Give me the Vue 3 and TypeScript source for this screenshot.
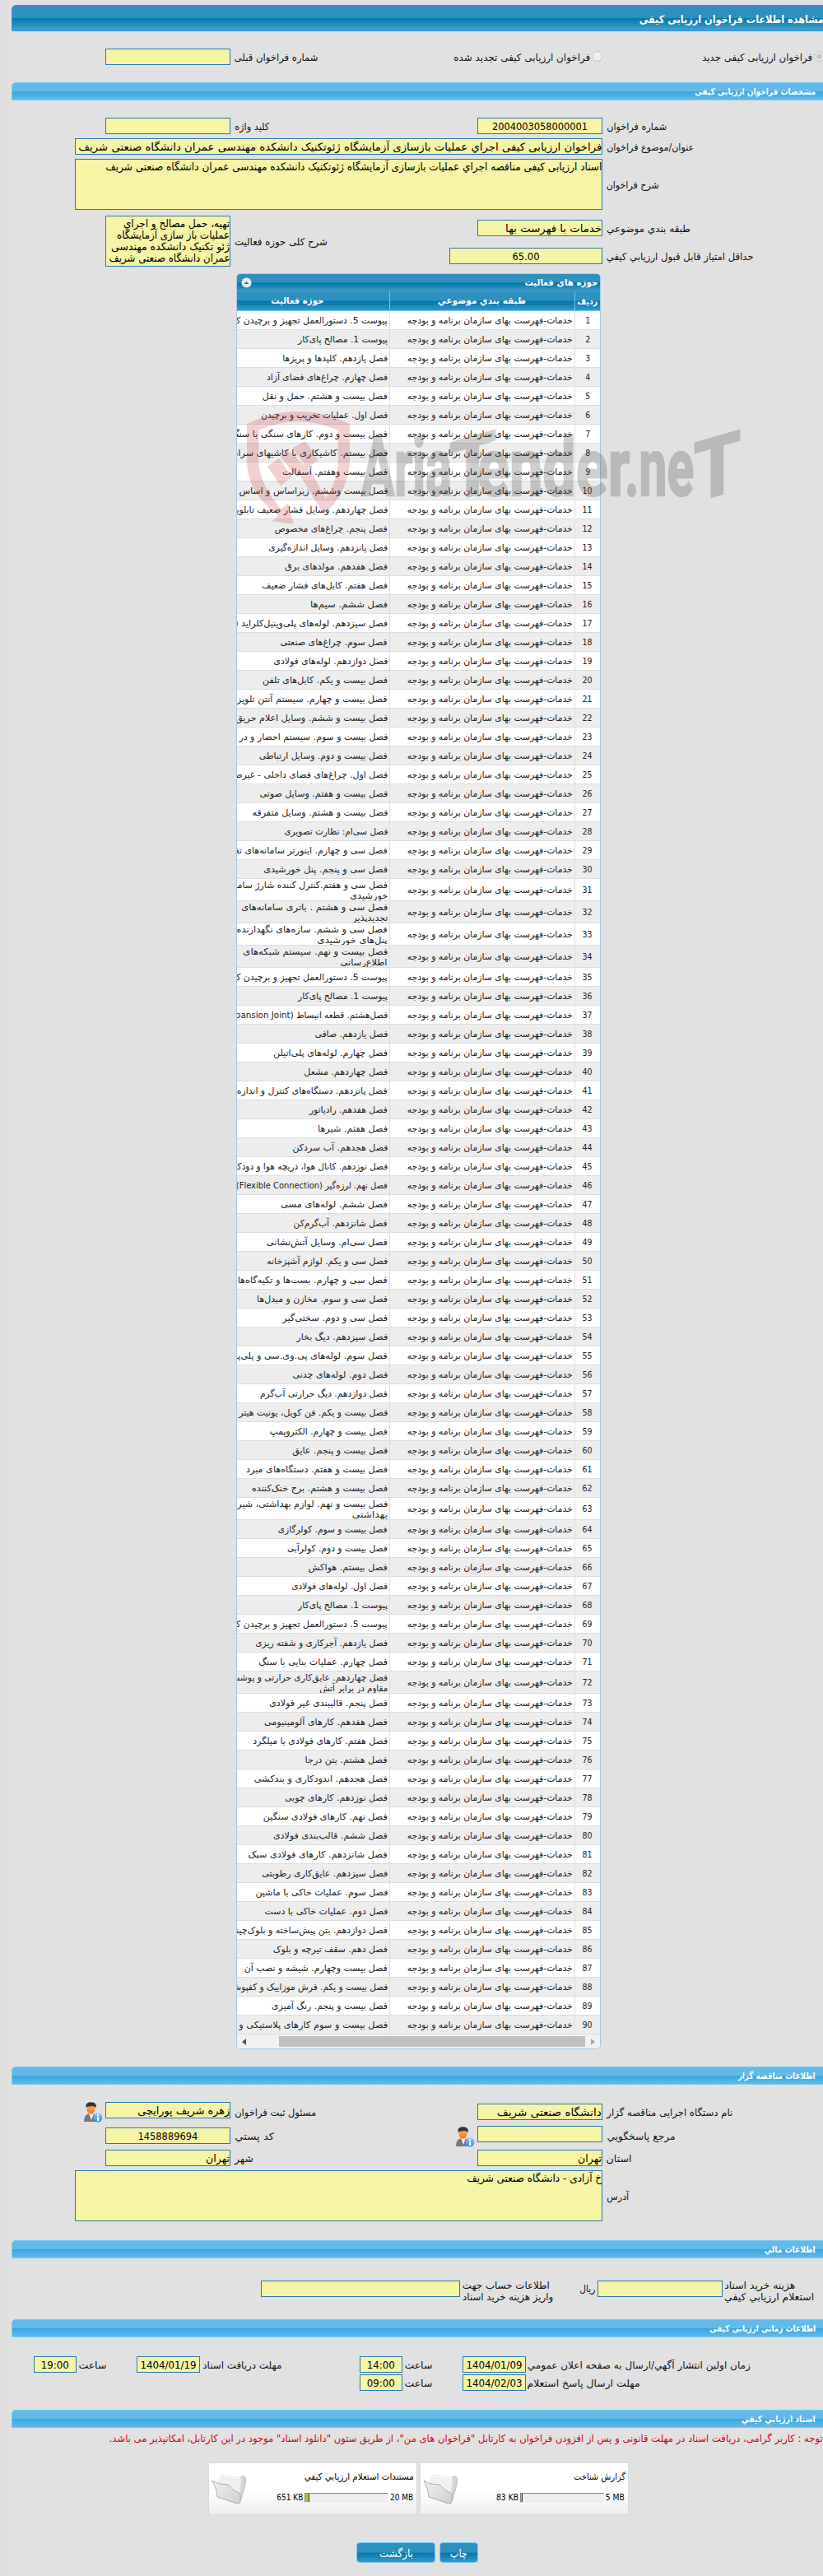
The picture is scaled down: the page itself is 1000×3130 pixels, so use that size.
<script setup lang="ts">
import type { Directive } from 'vue'

type Line = [text: string, width?: number]

const category = 'خدمات-فهرست بهای سازمان برنامه و بودجه'

// Condenses a run of text to the given width while keeping its letters joined.
const vFit: Directive<HTMLElement, number | undefined> = {
  mounted(el, { value }) {
    const natural = el.getBoundingClientRect().width
    if (!natural || !value) return
    el.style.transform = `scaleX(${value / natural})`
    el.style.marginLeft = `${value - natural}px`
  },
}

const activities: Line[][] = [
  [['پیوست 5. دستورالعمل تجهیز و برچیدن کارگاه', 206]],
  [['پیوست 1. مصالح پای‌کار', 109]],
  [['فصل یازدهم. کلیدها و پریزها', 128]],
  [['فصل چهارم. چراغ‌های فضای آزاد', 147]],
  [['فصل بیست و هشتم. حمل و نقل', 152]],
  [['فصل اول. عملیات تخریب و برچیدن', 154]],
  [['فصل بیست و دوم. کارهای سنگی با سنگ', 190]],
  [['فصل بیستم. کاشیکاری با کاشیهای سرامیکی', 207]],
  [['فصل بیست وهفتم. آسفالت', 128]],
  [['فصل بیست وششم. زیراساس و اساس', 181]],
  [['فصل چهاردهم. وسایل فشار ضعیف تابلویی', 193]],
  [['فصل پنجم. چراغ‌های مخصوص', 137]],
  [['فصل پانزدهم. وسایل اندازه‌گیری', 145]],
  [['فصل هفدهم. مولدهای برق', 125]],
  [['فصل هفتم. کابل‌های فشار ضعیف', 153]],
  [['فصل ششم. سیم‌ها', 94]],
  [['فصل سیزدهم. لوله‌های پلی‌وینیل‌کلراید (', 186]],
  [['فصل سوم. چراغ‌های صنعتی', 130]],
  [['فصل دوازدهم. لوله‌های فولادی', 139]],
  [['فصل بیست و یکم. کابل‌های تلفن', 152]],
  [['فصل بیست و چهارم. سیستم آنتن تلویزیون', 200]],
  [['فصل بیست و ششم. وسایل اعلام حریق', 185]],
  [['فصل بیست و سوم. سیستم احضار و در', 181]],
  [['فصل بیست و دوم. وسایل ارتباطی', 156]],
  [['فصل اول. چراغ‌های فضای داخلی - غیرصنعتی', 207]],
  [['فصل بیست و هفتم. وسایل صوتی', 156]],
  [['فصل بیست و هشتم. وسایل متفرقه', 165]],
  [['فصل سی‌ام: نظارت تصویری', 126]],
  [['فصل سی و چهارم. اینورتر سامانه‌های تغذیه', 200]],
  [['فصل سی و پنجم. پنل خورشیدی', 151]],
  [['فصل سی و هفتم.کنترل کننده شارژ سامانه‌های', 212], ['خورشیدی', 46]],
  [['فصل سی و هشتم . باتری سامانه‌های', 178], ['تجدیدپذیر', 43]],
  [['فصل سی و ششم. سازه‌های نگهدارنده', 183], ['پنل‌های خورشیدی', 85]],
  [['فصل بیست و نهم. سیستم شبکه‌های', 176], ['اطلاع‌رسانی', 57]],
  [['پیوست 5. دستورالعمل تجهیز و برچیدن کارگاه', 206]],
  [['پیوست 1. مصالح پای‌کار', 109]],
  [['فصل‌هشتم. قطعه انبساط (Expansion Joint)', 202]],
  [['فصل یازدهم. صافی', 89]],
  [['فصل چهارم. لوله‌های پلی‌اتیلن', 139]],
  [['فصل چهاردهم. مشعل', 102]],
  [['فصل پانزدهم. دستگاه‌های کنترل و اندازه', 183]],
  [['فصل هفدهم. رادیاتور', 95]],
  [['فصل هفتم. شیرها', 85]],
  [['فصل هجدهم. آب سردکن', 116]],
  [['فصل نوزدهم. کانال هوا، دریچه هوا و دودکش', 196]],
  [['فصل نهم. لرزه‌گیر (Flexible Connection)', 184]],
  [['فصل ششم. لوله‌های مسی', 130]],
  [['فصل شانزدهم. آب‌گرم‌کن', 114]],
  [['فصل سی‌ام. وسایل آتش‌نشانی', 147]],
  [['فصل سی و یکم. لوازم آشپزخانه', 147]],
  [['فصل سی و چهارم. بست‌ها و تکیه‌گاه‌ها', 182]],
  [['فصل سی و سوم. مخازن و مبدل‌ها', 159]],
  [['فصل سی و دوم. سختی‌گیر', 128]],
  [['فصل سیزدهم. دیگ بخار', 111]],
  [['فصل سوم. لوله‌های پی.وی.سی و پلی‌پروپیلن', 212]],
  [['فصل دوم. لوله‌های چدنی', 116]],
  [['فصل دوازدهم. دیگ حرارتی آب‌گرم', 155]],
  [['فصل بیست و یکم. فن کویل، یونیت هیتر', 181]],
  [['فصل بیست و چهارم. الکتروپمپ', 143]],
  [['فصل بیست و پنجم. عایق', 116]],
  [['فصل بیست و هفتم. دستگاه‌های مبرد', 172]],
  [['فصل بیست و هشتم. برج خنک‌کننده', 165]],
  [['فصل بیست و نهم. لوازم بهداشتی، شیر', 183], ['بهداشتی', 43]],
  [['فصل بیست و سوم. کولرگازی', 133]],
  [['فصل بیست و دوم. کولرآبی', 122]],
  [['فصل بیستم. هواکش', 96]],
  [['فصل اول. لوله‌های فولادی', 117]],
  [['پیوست 1. مصالح پای‌کار', 109]],
  [['پیوست 5. دستورالعمل تجهیز و برچیدن کارگاه', 206]],
  [['فصل یازدهم. آجرکاری و شفته ریزی', 161]],
  [['فصل چهارم. عملیات بنایی با سنگ', 157]],
  [['فصل چهاردهم. عایق‌کاری حرارتی و پوشش', 193], ['مقاوم در برابر آتش', 83]],
  [['فصل پنجم. قالببندی غیر فولادی', 144]],
  [['فصل هفدهم. کارهای آلومینیومی', 150]],
  [['فصل هفتم. کارهای فولادی با میلگرد', 164]],
  [['فصل هشتم. بتن درجا', 100]],
  [['فصل هجدهم. اندودکاری و بندکشی', 162]],
  [['فصل نوزدهم. کارهای چوبی', 125]],
  [['فصل نهم. کارهای فولادی سنگین', 151]],
  [['فصل ششم. قالب‌بندی فولادی', 139]],
  [['فصل شانزدهم. کارهای فولادی سبک', 169]],
  [['فصل سیزدهم. عایق‌کاری رطوبتی', 153]],
  [['فصل سوم. عملیات خاکی با ماشین', 161]],
  [['فصل دوم. عملیات خاکی با دست', 150]],
  [['فصل دوازدهم. بتن پیش‌ساخته و بلوک‌چینی', 193]],
  [['فصل دهم. سقف تیرچه و بلوک', 139]],
  [['فصل بیست وچهارم. شیشه و نصب آن', 174]],
  [['فصل بیست و یکم. فرش موزاییک و کفپوش', 191]],
  [['فصل بیست و پنجم. رنگ آمیزی', 141]],
  [['فصل بیست و سوم کارهای پلاستیکی و', 181]],
]

const scopeLines: Line[] = [
  ['تهیه، حمل مصالح و اجراي', 129],
  ['عملیات باز سازی آزمایشگاه', 137],
  ['ژئو تکنیک دانشکده مهندسی', 144],
  ['عمران دانشگاه صنعتی شریف', 147],
]

const documents = [
  { title: 'مستندات استعلام ارزيابي کيفي', width: 133, used: '651 KB', usedW: 32, total: '20 MB', totalW: 28, fill: 5 },
  { title: 'گزارش شناخت', width: 63, used: '83 KB', usedW: 27, total: '5 MB', totalW: 23, fill: 2 },
]
</script>

<template>
  <div class="page">
    <header class="title-bar"><b class="t" v-fit="224">مشاهده اطلاعات فراخوان ارزیابی کیفی</b></header>

    <div class="kind-row">
      <div class="field prev"></div>
      <div class="label prev-label"><span class="t" v-fit="102">شماره فراخوان قبلی</span></div>
      <label class="kind renewed"><span class="t" v-fit="166">فراخوان ارزیابی کیفی تجدید شده</span><i class="radio"></i></label>
      <label class="kind"><span class="t" v-fit="134">فراخوان ارزیابی کیفی جدید</span><i class="radio on"></i></label>
    </div>

    <h2 class="bar"><span class="t" v-fit="147">مشخصات فراخوان ارزیابی کیفی</span></h2>
    <section class="specs">
      <div class="pair">
        <div class="field c-left"></div>
        <div class="label"><span class="t" v-fit="42">کلید واژه</span></div>
        <div class="field mid"><span class="t" v-fit="116">2004003058000001</span></div>
        <div class="label"><span class="t" v-fit="73">شماره فراخوان</span></div>
      </div>
      <div class="wide">
        <div class="field"><span class="t" v-fit="636">فراخوان ارزیابی کیفی اجراي عملیات بازسازی آزمایشگاه ژئوتکنیک دانشکده مهندسی عمران دانشگاه صنعتی شریف</span></div>
        <div class="label"><span class="t" v-fit="106">عنوان/موضوع فراخوان</span></div>
      </div>
      <div class="wide">
        <div class="field area"><span class="t" v-fit="603">اسناد ارزیابی کیفی مناقصه اجراي عملیات بازسازی آزمایشگاه ژئوتکنیک دانشکده مهندسی عمران دانشگاه صنعتی شریف</span></div>
        <div class="label"><span class="t" v-fit="64">شرح فراخوان</span></div>
      </div>
      <div class="scope">
        <div class="field area small">
          <div v-for="l in scopeLines" :key="l[0]"><span class="t" v-fit="l[1]">{{ l[0] }}</span></div>
        </div>
        <div class="label scope-label"><span class="t" v-fit="113">شرح کلی حوزه فعالیت</span></div>
        <div class="scope-right">
          <div class="scope-line">
            <div class="field w152"><span class="t" v-fit="117">خدمات با فهرست بها</span></div>
            <div class="label"><span class="t" v-fit="102">طبقه بندي موضوعي</span></div>
          </div>
          <div class="scope-line">
            <div class="field w186 mid"><span class="t" v-fit="33">65.00</span></div>
            <div class="label"><span class="t" v-fit="179">حداقل امتیاز قابل قبول ارزيابي کيفي</span></div>
          </div>
        </div>
      </div>
    </section>

    <section class="grid-panel">
      <div class="grid-title">
        <svg width="13" height="13" viewBox="0 0 13 13"><circle cx="6.5" cy="6.5" r="6" fill="#e6eef5" /><path d="M3.5 8 L6.5 5 L9.5 8 Z" fill="#2779aa" /></svg>
        <b class="t" v-fit="89">حوزه های فعالیت</b>
      </div>
      <div class="grid-row grid-head">
        <div class="activity"><b class="t" v-fit="64">حوزه فعالیت</b></div>
        <div class="category"><b class="t" v-fit="107">طبقه بندي موضوعي</b></div>
        <div class="num"><b class="t" v-fit="25">ردیف</b></div>
      </div>
      <div v-for="(lines, i) in activities" :key="i" class="grid-row" :class="{ even: i % 2 === 1, tall: lines.length > 1 }">
        <div class="activity"><div v-for="l in lines" :key="l[0]" class="line"><span class="t" v-fit="l[1]">{{ l[0] }}</span></div></div>
        <div class="category"><span class="t" v-fit="201">{{ category }}</span></div>
        <div class="num"><span class="t" v-fit="i < 9 ? 6 : 12">{{ i + 1 }}</span></div>
      </div>
      <div class="scrollbar">
        <svg width="5" height="8" viewBox="0 0 5 8"><path d="M5 0V8L0 4Z" fill="#505050" /></svg>
        <div class="thumb"></div>
        <svg width="5" height="8" viewBox="0 0 5 8"><path d="M0 0V8L5 4Z" fill="#a3a3a3" /></svg>
      </div>
    </section>

    <h2 class="bar"><span class="t" v-fit="94">اطلاعات مناقصه گزار</span></h2>
    <section class="tenderer">
      <div class="pair first">
        <svg class="person up" viewBox="0 0 24 25"><use href="#person" /></svg>
        <div class="field up"><span class="t" v-fit="112">زهره شریف پورایچی</span></div>
        <div class="label"><span class="t" v-fit="99">مسئول ثبت فراخوان</span></div>
        <div class="field"><span class="t" v-fit="127">دانشگاه صنعتی شریف</span></div>
        <div class="label"><span class="t" v-fit="153">نام دستگاه اجرایی مناقصه گزار</span></div>
      </div>
      <div class="pair second">
        <div class="field c-left mid"><span class="t" v-fit="73">1458889694</span></div>
        <div class="label with-icon"><span class="t" v-fit="48">کد پستي</span><svg class="person" viewBox="0 0 24 25"><use href="#person" /></svg></div>
        <div class="field up"></div>
        <div class="label"><span class="t" v-fit="83">مرجع پاسخگويي</span></div>
      </div>
      <div class="pair third">
        <div class="field c-left"><span class="t" v-fit="29">تهران</span></div>
        <div class="label"><span class="t" v-fit="23">شهر</span></div>
        <div class="field"><span class="t" v-fit="29">تهران</span></div>
        <div class="label"><span class="t" v-fit="31">استان</span></div>
      </div>
      <div class="wide">
        <div class="field area"><span class="t" v-fit="164">خ آزادی - دانشگاه صنعتی شریف</span></div>
        <div class="label"><span class="t" v-fit="27">آدرس</span></div>
      </div>
    </section>

    <h2 class="bar"><span class="t" v-fit="62">اطلاعات مالي</span></h2>
    <section class="finance">
      <div class="field account"></div>
      <div class="two-line"><div><span class="t" v-fit="106">اطلاعات حساب جهت</span></div><div><span class="t" v-fit="110">واریز هزینه خرید اسناد</span></div></div>
      <div class="label rial"><span class="t" v-fit="19">ریال</span></div>
      <div class="field w152"></div>
      <div class="two-line"><div><span class="t" v-fit="86">هزینه خرید اسناد</span></div><div><span class="t" v-fit="109">استعلام ارزيابي کيفي</span></div></div>
    </section>

    <h2 class="bar"><span class="t" v-fit="129">اطلاعات زمانی ارزیابی کیفی</span></h2>
    <section class="times">
      <div class="time-row">
        <div class="field hour"><span class="t" v-fit="34">19:00</span></div>
        <div class="label hour-label"><span class="t" v-fit="34">ساعت</span></div>
        <div class="field date"><span class="t" v-fit="68">1404/01/19</span></div>
        <div class="label until"><span class="t" v-fit="96">مهلت دریافت اسناد</span></div>
        <div class="field hour"><span class="t" v-fit="34">14:00</span></div>
        <div class="label hour-label"><span class="t" v-fit="34">ساعت</span></div>
        <div class="field date"><span class="t" v-fit="68">1404/01/09</span></div>
        <div class="label"><span class="t" v-fit="271">زمان اولین انتشار آگهي/ارسال به صفحه اعلان عمومي</span></div>
      </div>
      <div class="time-row short">
        <div class="field hour"><span class="t" v-fit="34">09:00</span></div>
        <div class="label hour-label"><span class="t" v-fit="34">ساعت</span></div>
        <div class="field date"><span class="t" v-fit="68">1404/02/03</span></div>
        <div class="label"><span class="t" v-fit="137">مهلت ارسال پاسخ استعلام</span></div>
      </div>
    </section>

    <h2 class="bar"><span class="t" v-fit="90">اسناد ارزيابي کيفي</span></h2>
    <p class="notice"><span class="t" v-fit="867">توجه : کاربر گرامی، دریافت اسناد در مهلت قانونی و پس از افزودن فراخوان به کارتابل "فراخوان های من"، از طریق ستون "دانلود اسناد" موجود در این کارتابل، امکانپذیر می باشد.</span></p>

    <div class="cards">
      <article v-for="d in documents" :key="d.title" class="card">
        <svg class="folder" viewBox="0 0 42 38">
          <path d="M22 12 L36 4 L38 2 L42 5 L41 13 L36 31 L31 33Z" fill="#d5d5d5" stroke="#aaa" stroke-width=".7" />
          <path d="M8 10 L12 1 L36 5 L34 28 L10 18Z" fill="#fafafa" stroke="#ddd" stroke-width=".7" />
          <path d="M9 12 L13 4 L34 7 L33 30Z" fill="#f1f1f1" stroke="#e0e0e0" stroke-width=".6" />
          <path d="M1 8 L9 12 L20 13 Q25 19 33 23 L35 24 L35 34 Q34 37 31 36 L7 28 Q6 25 6 20Z" fill="url(#fold)" stroke="#a5a5a5" stroke-width=".9" />
        </svg>
        <div class="card-body">
          <div><span class="t" v-fit="d.width">{{ d.title }}</span></div>
          <div class="usage">
            <span class="t" v-fit="d.usedW">{{ d.used }}</span>
            <div class="meter"><div class="fill" :style="{ width: d.fill + 'px' }"></div></div>
            <span class="t" v-fit="d.totalW">{{ d.total }}</span>
          </div>
        </div>
      </article>
    </div>

    <div class="actions">
      <button class="btn back"><span class="t" v-fit="41">بازگشت</span></button>
      <button class="btn print"><span class="t" v-fit="21">چاپ</span></button>
    </div>

    <svg class="watermark" width="610" height="145" viewBox="0 0 610 145">
      <g fill="#c2272d" fill-opacity=".21" transform="translate(0 0) scale(.3333) translate(-90 -540)">
        <path d="M90 585 Q277 495 465 585 V720 Q458 840 370 915 L285 775 L322 755 L376 855 Q422 795 422 720 V608 Q277 545 133 608 V730 Q142 815 215 895 L240 875 L260 950 L182 940 L205 920 Q90 835 90 720 Z" />
        <path d="M165 740 L208 711 L254 780 L212 810 Z" />
        <path d="M213 706 L238 682 L318 752 L272 780 Z" />
        <path d="M256 672 L304 648 L350 718 L308 746 Z" />
      </g>
      <g class="wm-text" opacity=".25">
        <text x="139" y="102" textLength="110" lengthAdjust="spacingAndGlyphs" font-size="98">Aria</text>
        <text x="0" y="0" textLength="57" lengthAdjust="spacingAndGlyphs" font-size="100" transform="translate(246 110) skewY(-16)">T</text>
        <text x="280" y="102" textLength="185" lengthAdjust="spacingAndGlyphs" font-size="98">ender</text>
        <text x="459" y="102" textLength="84" lengthAdjust="spacingAndGlyphs" font-size="98">.ne</text>
        <text x="0" y="0" textLength="57" lengthAdjust="spacingAndGlyphs" font-size="100" transform="translate(543 110) skewY(-16)">T</text>
      </g>
    </svg>

    <svg class="defs" width="0" height="0">
      <defs>
        <linearGradient id="fold" x1="0" y1="0" x2="1" y2="1"><stop offset="0" stop-color="#f2f2f2" /><stop offset="1" stop-color="#cfcfcf" /></linearGradient>
        <linearGradient id="face" x1="0" y1="0" x2="0" y2="1"><stop offset="0" stop-color="#ffb066" /><stop offset="1" stop-color="#f07818" /></linearGradient>
        <linearGradient id="badge" x1="0" y1="0" x2="0" y2="1"><stop offset="0" stop-color="#8cc8f5" /><stop offset="1" stop-color="#2f8fe0" /></linearGradient>
        <g id="person">
          <path d="M1 24 Q1 16 6 14.5 L13 14.5 Q18 16 18 24Z" fill="#777" />
          <path d="M7 14 L10 22 L13 14Z" fill="#eee" />
          <ellipse cx="9.5" cy="8.5" rx="5" ry="6.2" fill="url(#face)" />
          <path d="M3.5 7 Q2.5 0 9.5 .3 Q16.5 0 16 7 Q12 3.8 8 5.5 Q5 5 3.5 7Z" fill="#333" />
          <circle cx="18" cy="19" r="5.5" fill="url(#badge)" />
          <rect x="17" y="18" width="2.2" height="5" fill="#fff" /><rect x="17" y="15" width="2.2" height="2" fill="#fff" />
        </g>
      </defs>
    </svg>
  </div>
</template>

<style>
body { background: #e1e1e1; }
</style>

<style scoped>
.page { position: relative; width: 1000px; height: 3130px; box-sizing: border-box; padding: 6px 0 0 14px; overflow: hidden; background: linear-gradient(90deg, #dfdfdf 8px, #e1e1e1 8px); font: 12px "DejaVu Sans Condensed", "DejaVu Sans", sans-serif; color: #111; }
.t { display: inline-block; white-space: nowrap; direction: rtl; transform-origin: right center; flex: none; }
.title-bar { display: flex; justify-content: flex-end; align-items: center; height: 32px; box-sizing: border-box; margin-right: -2px; border: 1px solid #2b95e6; border-radius: 5px 0 0 0; background: linear-gradient(#2e90be 0 48%, #0078b0 52%, #0c80b5 60%, #4aa0c8); color: #fff; font-size: 13px; padding-top: 3px; }
.bar { display: flex; justify-content: flex-end; align-items: center; height: 22px; box-sizing: border-box; margin: 0 -6px 0 0; padding: 1px 14px 0 0; border: 1px solid #6fcbf3; border-radius: 5px 5px 0 0; background: linear-gradient(#62baea 0 48%, #38a7e1 52%, #62b9e9); color: #fff; font-size: 11px; font-weight: bold; }
.field { box-sizing: border-box; height: 20px; flex: none; border: 1px solid #2779aa; background: #f6f4a5; color: #000; font-size: 13px; line-height: 16px; padding: 2px 0 0; text-align: right; white-space: nowrap; overflow: hidden; }
.mid, .hour, .date { text-align: center; }
.label { display: flex; align-items: center; flex: none; font-size: 12px; padding-top: 2px; }
.kind-row { display: flex; align-items: center; height: 62px; padding-left: 114px; box-sizing: border-box; }
.prev { width: 152px; }
.prev-label { width: 266px; padding-left: 5px; }
.kind { display: flex; align-items: center; gap: 2px; flex: none; padding-top: 2px; }
.kind.renewed { width: 181px; margin-right: 121px; }
.radio { width: 11px; height: 11px; flex: none; margin-top: -3px; border: 1px solid #c4c4c4; border-radius: 50%; background: #efefef; }
.radio.on { box-shadow: inset 0 0 0 2px #eee; background: #c6c6c6; }
.specs { padding-top: 21px; }
.pair { display: grid; grid-template-columns: 87px 27px 152px 5px 295px 152px 5px 263px; grid-template-rows: 20px; height: 20px; margin-bottom: 5px; }
.pair > .person { grid-column: 1; justify-self: end; }
.pair > .field.c-left, .pair > .person + .field { grid-column: 3; }
.pair > .field.c-left + .label, .pair > .person + .field + .label { grid-column: 5; }
.pair > .label + .field { grid-column: 6; }
.pair > .label + .field + .label { grid-column: 8; }
.wide { display: flex; gap: 5px; margin: 0 0 5px 77px; }
.wide > .field { width: 641px; }
.area { height: 62px; padding: 0; line-height: 18px; }
.specs .wide + .wide { margin-bottom: 7px; }
.scope { display: flex; margin-left: 114px; height: 70px; align-items: flex-start; }
.small { width: 152px; height: 62px; margin-top: 0; }
.small > div { height: 14px; line-height: 17px; }
.small .t { line-height: 17px; }
.scope-label { margin: 23px 0 0 5px; width: 261px; }
.scope-right { display: grid; gap: 14px; padding-top: 5px; }
.scope-line { display: grid; grid-template-columns: 186px auto; column-gap: 5px; justify-content: start; }
.scope-line .field { justify-self: end; }
.w152 { width: 152px; }
.w186 { width: 186px; }
.grid-panel { width: 443px; height: 2158px; box-sizing: border-box; margin: 0 0 21px 273px; border: 1px solid #a6c9e2; border-radius: 5px; overflow: hidden; background: #fcfdfd; color: #222; font-size: 11px; }
.grid-title { display: flex; justify-content: space-between; align-items: center; height: 22px; box-sizing: border-box; padding: 0 3px 0 5px; background: linear-gradient(#2e90be 0 46%, #0078b0 52%, #4399c5); color: #fff; border-bottom: 1px solid #3c97cc; }
.grid-row { display: grid; grid-template-columns: 185px 225px 1fr; height: 22px; border-bottom: 1px solid #ddd; background: #fff; }
.grid-row > div { display: flex; align-items: center; justify-content: flex-end; overflow: hidden; padding: 1px 2px 0 0; }
.grid-row > .category, .grid-row > .num { border-left: 1px solid #ddd; }
.grid-row > .num { justify-content: center; padding: 0; }
.grid-row.even { background: #ededed; }
.grid-row.tall { height: 26px; }
.grid-row > .activity { flex-direction: column; align-items: flex-end; justify-content: center; }
.line { height: 13px; line-height: 14px; flex: none; display: flex; justify-content: flex-end; }
.grid-row.grid-head { height: 22px; background: linear-gradient(#2e90be 0 44%, #0078b0 52%, #3f97c4); color: #fff; border-color: #6fcbf3; }
.grid-head > .category, .grid-head > .num { border-color: #6fcbf3; }
.grid-head > .activity { align-items: center; padding: 0 38px 2px 0; }
.grid-head > .category { justify-content: center; padding-bottom: 2px; }
.scrollbar { display: flex; align-items: center; height: 17px; background: #f1f1f1; padding-left: 6px; }
.thumb { width: 372px; height: 13px; margin: 0 7px 0 40px; background: #c1c1c1; }
.person { width: 24px; height: 25px; flex: none; }
.tenderer { padding-top: 23px; height: 189px; box-sizing: border-box; }
.up { position: relative; top: -2px; }
.pair.first { margin-bottom: 9px; grid-template-columns: 111px 3px 152px 5px 295px 152px 5px 263px; }
.pair.second { margin-bottom: 7px; }
.with-icon { justify-content: space-between; padding-right: 3px; }
.finance { display: flex; align-items: flex-start; height: 74px; box-sizing: border-box; padding: 27px 0 0 303px; }
.account { width: 242px; }
.two-line { flex: none; width: 141px; margin: -1px 0 0 3px; font-size: 12px; }
.two-line > div { display: flex; height: 14px; line-height: 14px; }
.rial { width: 22px; margin-top: 1px; }
.finance .two-line + .rial { margin-left: 1px; }
.finance .two-line:last-child { margin-left: 2px; width: 109px; }
.times { height: 88px; box-sizing: border-box; padding-top: 23px; }
.time-row { display: flex; height: 20px; margin: 0 0 2px 27px; }
.time-row.short { margin-left: 423px; }
.hour { width: 52px; }
.date { width: 77px; }
.time-row .label { margin-left: 2px; }
.hour-label { width: 71px; }
.time-row .until { width: 191px; margin-left: 3px; }
.notice { margin: 4px 0 0; height: 38px; display: flex; justify-content: flex-end; color: #d2000f; font-size: 12px; line-height: 19px; }
.cards { display: flex; gap: 3px; margin-left: 239px; }
.card { display: flex; width: 254px; height: 64px; box-sizing: border-box; border: 1px solid #d9d9d9; background: linear-gradient(#fff 55%, #eee); font-size: 11px; color: #000; }
.folder { width: 42px; height: 38px; margin: 13px 0 0 3px; flex: none; }
.card-body { flex: 1; display: flex; flex-direction: column; align-items: flex-end; padding: 10px 3px 0 0; }
.usage { display: flex; align-items: center; gap: 2px; margin-top: 12px; padding-right: 1px; }
.usage .t { direction: ltr; }
.meter { width: 102px; height: 12px; box-sizing: border-box; border: 1px solid #eee; border-top-color: #888; border-left-color: #888; background: #eee; }
.fill { height: 100%; box-sizing: border-box; background: #9acd32; border-right: 1px solid #333; }
.actions { display: flex; gap: 5px; margin: 33px 0 0 419px; }
.btn { height: 25px; padding: 2px 0 0; border: 1px solid #6fcbf3; border-radius: 4px; background: linear-gradient(#2e90be 0 48%, #0078b0 54%, #3f97c4); color: #fff; font: 13px "DejaVu Sans Condensed", "DejaVu Sans", sans-serif; }
.back { width: 96px; }
.print { width: 47px; }
.watermark { position: absolute; left: 300px; top: 500px; pointer-events: none; }
.wm-text { font-family: Roboto, "Open Sans", sans-serif; font-weight: bold; fill: #444; stroke: #444; stroke-width: 2.5; }
.defs { position: absolute; }
</style>
